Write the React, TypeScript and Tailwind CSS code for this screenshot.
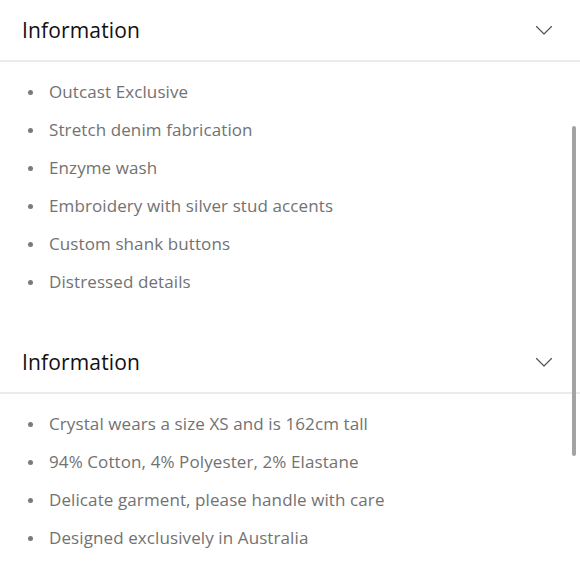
import React from "react";

const sections = [
  {
    title: "Information",
    items: [
      "Outcast Exclusive",
      "Stretch denim fabrication",
      "Enzyme wash",
      "Embroidery with silver stud accents",
      "Custom shank buttons",
      "Distressed details",
    ],
  },
  {
    title: "Information",
    items: [
      "Crystal wears a size XS and is 162cm tall",
      "94% Cotton, 4% Polyester, 2% Elastane",
      "Delicate garment, please handle with care",
      "Designed exclusively in Australia",
    ],
  },
];

function Chevron() {
  return (
    <svg width="16" height="9" viewBox="0 0 16 9" fill="none">
      <path d="M0.5 0.5 L8 8 L15.5 0.5" stroke="#555" strokeWidth="1.2" strokeLinecap="round" strokeLinejoin="round" />
    </svg>
  );
}

export default function App() {
  return (
    <div
      className="relative w-[580px] h-[580px] overflow-hidden bg-white"
      style={{ fontFamily: '"Open Sans", "Noto Sans", sans-serif' }}
    >
      {sections.map((s, i) => (
        <section key={i}>
          <div className="h-[62px] flex items-center justify-between pl-[22px] pr-[28px] border-b-2 border-[#ebebeb]">
            <span className="text-[21px] tracking-[0.15px] text-[#111] pt-[1px]">{s.title}</span>
            <Chevron />
          </div>
          <ul className="pt-[11px] pb-[31px] pl-[28px]">
            {s.items.map((t) => (
              <li key={t} className="h-[38px] flex items-center text-[17px] tracking-[0.1px] text-[#727272]">
                <span className="w-[5px] h-[5px] rounded-full bg-[#7a7a7a] mr-[16px]" />
                {t}
              </li>
            ))}
          </ul>
        </section>
      ))}
      <div className="absolute right-[4px] top-[126px] w-[4px] h-[330px] rounded-full bg-[#a3a3a3]" />
    </div>
  );
}
